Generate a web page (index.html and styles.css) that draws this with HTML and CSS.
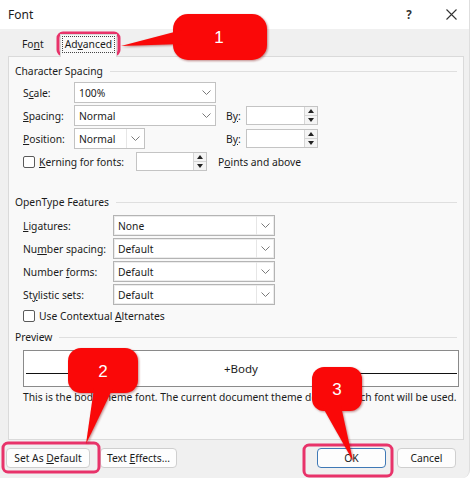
FILE: index.html
```html
<!DOCTYPE html>
<html lang="en">
<head>
  <meta charset="UTF-8" />
  <title>Font</title>
  <link rel="stylesheet" href="styles.css">
</head>
<body>
  <div class="dialog">
    <div class="titlebar">
      <span class="title">Font</span>
      <span class="help">?</span>
      <span class="close">
        <svg width="11" height="11" viewBox="0 0 11 11"><path d="M0.5 0.5 L10.5 10.5 M10.5 0.5 L0.5 10.5" stroke="#333" stroke-width="1.1" fill="none"/></svg>
      </span>
    </div>

    <div class="tabs">
      <div class="tab">Fo<u>n</u>t</div>
      <div class="tab active"><span class="focus">Ad<u>v</u>anced</span></div>
    </div>

    <div class="panel">
      <div class="group-title">Character Spacing</div>
      <div class="rows">
        <div class="row first">
          <span class="lbl small">S<u>c</u>ale:</span>
          <div class="select w142"><span>100%</span><span class="arrow"><svg width="9" height="5" viewBox="0 0 9 5"><polyline points="0.5,0.5 4.5,4.5 8.5,0.5" fill="none" stroke="#7a7a7a"/></svg></span></div>
        </div>
        <div class="row">
          <span class="lbl small"><u>S</u>pacing:</span>
          <div class="select w142"><span>Normal</span><span class="arrow"><svg width="9" height="5" viewBox="0 0 9 5"><polyline points="0.5,0.5 4.5,4.5 8.5,0.5" fill="none" stroke="#7a7a7a"/></svg></span></div>
          <span class="by">B<u>y</u>:</span>
          <div class="spin w72"><span class="btns"><span class="up"></span><span class="down"></span></span></div>
        </div>
        <div class="row">
          <span class="lbl small"><u>P</u>osition:</span>
          <div class="cell w142">
            <div class="select w71"><span>Normal</span><span class="arrow boxed"><svg width="9" height="5" viewBox="0 0 9 5"><polyline points="0.5,0.5 4.5,4.5 8.5,0.5" fill="none" stroke="#7a7a7a"/></svg></span></div>
          </div>
          <span class="by">B<u>y</u>:</span>
          <div class="spin w72"><span class="btns"><span class="up"></span><span class="down"></span></span></div>
        </div>
        <div class="row">
          <span class="check-lbl w113"><span class="box"></span><span><u>K</u>erning for fonts:</span></span>
          <div class="spin w71"><span class="btns"><span class="up"></span><span class="down"></span></span></div>
          <span class="after">P<u>o</u>ints and above</span>
        </div>
      </div>

      <div class="group-title second">OpenType Features</div>
      <div class="rows">
        <div class="row first2">
          <span class="lbl wide"><u>L</u>igatures:</span>
          <div class="select ot"><span>None</span><span class="arrow boxed"><svg width="9" height="5" viewBox="0 0 9 5"><polyline points="0.5,0.5 4.5,4.5 8.5,0.5" fill="none" stroke="#7a7a7a"/></svg></span></div>
        </div>
        <div class="row">
          <span class="lbl wide">Nu<u>m</u>ber spacing:</span>
          <div class="select ot"><span>Default</span><span class="arrow boxed"><svg width="9" height="5" viewBox="0 0 9 5"><polyline points="0.5,0.5 4.5,4.5 8.5,0.5" fill="none" stroke="#7a7a7a"/></svg></span></div>
        </div>
        <div class="row">
          <span class="lbl wide">Number <u>f</u>orms:</span>
          <div class="select ot"><span>Default</span><span class="arrow boxed"><svg width="9" height="5" viewBox="0 0 9 5"><polyline points="0.5,0.5 4.5,4.5 8.5,0.5" fill="none" stroke="#7a7a7a"/></svg></span></div>
        </div>
        <div class="row">
          <span class="lbl wide">St<u>y</u>listic sets:</span>
          <div class="select ot"><span>Default</span><span class="arrow boxed"><svg width="9" height="5" viewBox="0 0 9 5"><polyline points="0.5,0.5 4.5,4.5 8.5,0.5" fill="none" stroke="#7a7a7a"/></svg></span></div>
        </div>
        <div class="row check-row">
          <span class="check-lbl"><span class="box"></span><span>Use Contextual <u>A</u>lternates</span></span>
        </div>
      </div>

      <div class="group-title third">Preview</div>
      <div class="rows">
        <div class="preview">
          <span class="pline"></span>
          <span class="ptext">+Body</span>
          <span class="pline right"></span>
        </div>
        <p class="desc">This is the body theme font. The current document theme defines which font will be used.</p>
      </div>
    </div>

    <div class="footer">
      <button class="btn w84">Set As <u>D</u>efault</button>
      <button class="btn w77 gap">Text <u>E</u>ffects...</button>
      <button class="btn w69 ok">OK</button>
      <button class="btn w59 gap2">Cancel</button>
    </div>

    <svg class="marks" width="474" height="478" viewBox="0 0 474 478">
      <rect x="58" y="33" width="61" height="22" rx="5" class="hl"/>
      <rect x="3" y="443" width="96" height="29" rx="5" class="hl"/>
      <rect x="304" y="445" width="88" height="31" rx="5" class="hl"/>

      <g class="callout">
        <rect x="173" y="14" width="94" height="46" rx="15"/>
        <polygon points="182,30 182,44 121,46"/>
        <rect x="68" y="348" width="70" height="45" rx="13"/>
        <polygon points="94,388 113,388 86,444"/>
        <rect x="312" y="367" width="50" height="44" rx="12"/>
        <polygon points="322,406 341,406 353,461"/>
      </g>
      <text x="219" y="43" class="num">1</text>
      <text x="103" y="377" class="num">2</text>
      <text x="337" y="395" class="num">3</text>
    </svg>
  </div>
</body>
</html>
```

FILE: styles.css
```css
* {
  margin: 0;
  padding: 0;
  box-sizing: border-box;
}

body {
  width: 474px;
  height: 478px;
  overflow: hidden;
  background: #fff;
  font-family: "Noto Sans", sans-serif;
  font-size: 10.3px;
  color: #1b1b1b;
}

u {
  text-underline-offset: 1px;
}

.dialog {
  position: relative;
  width: 470px;
  height: 478px;
  background: #f0f0f0;
  border-right: 1px solid #dedede;
  border-bottom-right-radius: 8px;
}

/* title bar */
.titlebar {
  height: 29px;
  background: #fff;
  display: flex;
  align-items: center;
  padding-left: 8px;
  padding-right: 8px;
}

.title {
  flex: 1;
  font-size: 12px;
}

.help {
  width: 20px;
  text-align: center;
  font-weight: 700;
  font-size: 11.5px;
  color: #333;
}

.close {
  width: 20px;
  margin-left: 22px;
  display: flex;
  justify-content: center;
}

/* tabs */
.tabs {
  height: 27px;
  display: flex;
  align-items: flex-end;
  padding-left: 14px;
}

.tab {
  height: 22px;
  line-height: 21px;
  padding: 0 8px;
}

.tab.active {
  position: relative;
  z-index: 1;
  height: 23px;
  margin-left: 8px;
  margin-bottom: -1px;
  padding: 2px 2px 0;
  background: #f9f9f9;
  border: 1px solid #d9d9d9;
  border-bottom: none;
}

.focus {
  display: block;
  line-height: 15px;
  padding: 0 2px;
  outline: 1px dotted #444;
}

/* panel */
.panel {
  width: 456px;
  height: 384px;
  margin-left: 8px;
  background: #f9f9f9;
  border: 1px solid #dadada;
  padding: 7px 6px 0;
}

.group-title {
  display: flex;
  align-items: center;
  height: 14px;
  line-height: 14px;
}

.group-title::after {
  content: "";
  flex: 1;
  margin-left: 7px;
  border-top: 1px solid #dfdfdf;
}

.group-title.second {
  margin-top: 23px;
}

.group-title.third {
  margin-top: 6px;
}

.rows {
  padding-left: 8px;
}

.row {
  display: flex;
  align-items: center;
  height: 21px;
  margin-top: 2px;
}

.row.first {
  margin-top: 4px;
}

.row.first2 {
  margin-top: 6px;
}

.row.check-row {
  height: 16px;
  margin-top: 3px;
}

.lbl.small {
  width: 51px;
}

.lbl.wide {
  width: 90px;
}

.cell.w142 {
  width: 142px;
}

.select {
  height: 21px;
  display: flex;
  align-items: center;
  padding-left: 4px;
  background: #fff;
  border: 1px solid #c2c2c2;
}

.select.w142 { width: 142px; }
.select.w71 { width: 71px; }

.select.ot {
  width: 162px;
  border-color: #b4b4b4;
  box-shadow: inset 0 0 0 1px #ececec;
}

.arrow {
  margin-left: auto;
  width: 18px;
  height: 100%;
  display: flex;
  align-items: center;
  justify-content: center;
}

.arrow.boxed {
  border-left: 1px solid #e6e6e6;
}

.by {
  width: 20px;
  margin-left: 10px;
}

.spin {
  height: 19px;
  display: flex;
  background: #fff;
  border: 1px solid #c4c4c4;
}

.spin.w72 { width: 72px; }
.spin.w71 { width: 71px; }

.btns {
  margin-left: auto;
  width: 13px;
  display: flex;
  flex-direction: column;
  border-left: 1px solid #d6d6d6;
  background: #f4f4f4;
}

.btns span {
  flex: 1;
  display: flex;
  align-items: center;
  justify-content: center;
}

.btns .up {
  border-bottom: 1px solid #d6d6d6;
}

.btns .up::before {
  content: "";
  border-left: 3px solid transparent;
  border-right: 3px solid transparent;
  border-bottom: 4px solid #222;
}

.btns .down::before {
  content: "";
  border-left: 3px solid transparent;
  border-right: 3px solid transparent;
  border-top: 4px solid #222;
}

.check-lbl {
  display: flex;
  align-items: center;
  white-space: nowrap;
}

.check-lbl.w113 {
  width: 113px;
}

.box {
  flex-shrink: 0;
  width: 12px;
  height: 12px;
  margin-right: 4px;
  background: #fff;
  border: 1px solid #5a5a5a;
  border-radius: 2px;
}

.after {
  margin-left: 11px;
}

/* preview */
.preview {
  width: 436px;
  height: 37px;
  margin-top: 6px;
  display: flex;
  align-items: center;
  padding: 0 1px 0 2px;
  background: #fff;
  border: 1px solid #8a8a8a;
}

.pline {
  width: 101px;
  margin-top: 9px;
  border-top: 1px solid #111;
}

.pline.right {
  width: 102px;
}

.ptext {
  flex: 1;
  text-align: center;
  font-size: 11.5px;
}

.desc {
  margin-top: 3px;
  line-height: 14px;
  white-space: nowrap;
}

/* footer */
.footer {
  display: flex;
  padding: 8px 13px 0 6px;
}

.btn {
  height: 20px;
  font-family: inherit;
  font-size: inherit;
  color: #1b1b1b;
  background: #fdfdfd;
  border: 1px solid #cfcfcf;
  border-radius: 4px;
}

.btn.w84 { width: 84px; }
.btn.w77 { width: 77px; }
.btn.w69 { width: 69px; }
.btn.w59 { width: 59px; }
.btn.gap { margin-left: 10px; }
.btn.gap2 { margin-left: 11px; }

.btn.ok {
  margin-left: auto;
  border-color: #3f79b6;
}

/* annotation overlay */
.marks {
  position: absolute;
  top: 0;
  left: 0;
  pointer-events: none;
}

.hl {
  fill: none;
  stroke: #e8336a;
  stroke-width: 3;
}

.callout {
  fill: #fa0808;
  filter: drop-shadow(1px 1px 1px rgba(120, 0, 0, 0.45));
}

.num {
  fill: #fff;
  font-family: "Liberation Sans", sans-serif;
  font-size: 17px;
  text-anchor: middle;
}
```
